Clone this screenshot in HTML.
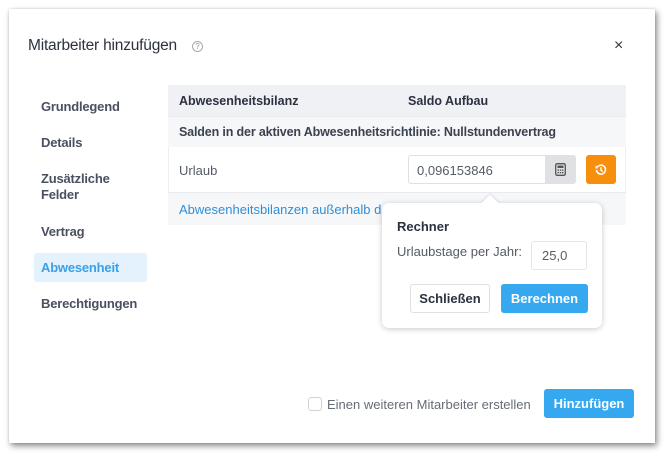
<!DOCTYPE html><html><head><meta charset="utf-8"><style>
*{box-sizing:border-box;margin:0;padding:0}
body{width:670px;height:457px;background:#fff;font-family:"Liberation Sans",sans-serif;color:#3b4150;position:relative;overflow:hidden;font-size:13px}
.a{position:absolute;white-space:nowrap}
.dlg{left:9px;top:9px;width:646px;height:434px;background:#fff;box-shadow:2px 3px 6px rgba(0,0,0,.45),0 0 2px rgba(0,0,0,.15)}
.b{font-weight:bold}
.nav{left:41px;font-weight:bold;color:#4a5060;font-size:13px;letter-spacing:-.2px}
.btn{border-radius:3px;text-align:center;font-weight:bold;font-size:13px;line-height:29px}
</style></head><body>
<div class="a dlg"></div>
<div class="a" style="left:28px;top:37px;font-size:15.5px;color:#2c3140;letter-spacing:-.2px">Mitarbeiter hinzufügen</div>
<div class="a" style="left:192px;top:41px;width:11px;height:11px;border:1px solid #aaa;border-radius:50%;font-size:8px;line-height:9px;text-align:center;color:#999">?</div>
<div class="a" style="left:614px;top:37px;font-size:16px;color:#333">×</div>

<div class="a nav" style="top:99px">Grundlegend</div>
<div class="a nav" style="top:135px">Details</div>
<div class="a nav" style="top:171px;line-height:16px">Zusätzliche<br>Felder</div>
<div class="a nav" style="top:224px">Vertrag</div>
<div class="a" style="left:34px;top:253px;width:113px;height:29px;background:#e3f2fc;border-radius:3px"></div>
<div class="a nav" style="top:260px;color:#3aa0e8">Abwesenheit</div>
<div class="a nav" style="top:296px">Berechtigungen</div>

<div class="a" style="left:168px;top:85px;width:458px;height:140px;border:1px solid #eceef1;background:#fff"></div>
<div class="a" style="left:168px;top:85px;width:458px;height:31px;background:#eff1f4"></div>
<div class="a" style="left:168px;top:116px;width:458px;height:31px;background:#f6f7f9;border-top:1px solid #e8eaed"></div>
<div class="a" style="left:168px;top:192px;width:458px;height:33px;background:#f6f7f9;border-top:1px solid #e8eaed"></div>
<div class="a b" style="left:179px;top:94px;font-size:12.5px;color:#2c3140">Abwesenheitsbilanz</div>
<div class="a b" style="left:408px;top:94px;font-size:12.5px;color:#2c3140">Saldo Aufbau</div>
<div class="a b" style="left:179px;top:125px;font-size:12.5px;color:#3b4150;letter-spacing:-.15px">Salden in der aktiven Abwesenheitsrichtlinie: Nullstundenvertrag</div>
<div class="a" style="left:179px;top:163px;color:#555b66">Urlaub</div>
<div class="a" style="left:408px;top:155px;width:168px;height:29px;border:1px solid #dde0e4;border-radius:3px;background:#fff"></div>
<div class="a" style="left:545px;top:155px;width:31px;height:29px;background:#dfe1e4;border-radius:0 3px 3px 0"></div>
<svg class="a" style="left:555px;top:163px" width="11" height="13" viewBox="0 0 11 13"><rect x=".7" y=".7" width="9.6" height="11.6" rx="1.5" fill="none" stroke="#555" stroke-width="1.3"/><rect x="2.5" y="2.5" width="6" height="2.5" fill="#555"/><g fill="#555"><rect x="2.5" y="6.5" width="1.5" height="1.3"/><rect x="4.8" y="6.5" width="1.5" height="1.3"/><rect x="7" y="6.5" width="1.5" height="1.3"/><rect x="2.5" y="9" width="1.5" height="1.3"/><rect x="4.8" y="9" width="1.5" height="1.3"/><rect x="7" y="9" width="1.5" height="1.3"/></g></svg>
<div class="a" style="left:417px;top:163px;color:#555b66">0,096153846</div>
<div class="a" style="left:586px;top:155px;width:30px;height:29px;background:#f78e0c;border-radius:3px"></div>
<svg class="a" style="left:595px;top:164px" width="12" height="12" viewBox="0 0 12 12"><path d="M2.2 3.2A4.5 4.5 0 1 1 1.5 6" fill="none" stroke="#fff" stroke-width="1.6"/><path d="M0.6 1.2L2.8 4.2L0.3 4.6Z" fill="#fff"/><path d="M6 3.3V6.3L7.8 7.6" fill="none" stroke="#fff" stroke-width="1.4"/></svg>
<div class="a" style="left:179px;top:202px;color:#2f8fd8">Abwesenheitsbilanzen außerhalb der</div>

<div class="a" style="left:382px;top:203px;width:220px;height:125px;background:#fff;border-radius:7px;box-shadow:0 1px 6px rgba(0,0,0,.22)"></div>
<div class="a" style="left:484px;top:197px;width:12px;height:12px;background:#fff;transform:rotate(45deg);box-shadow:-1px -1px 2px rgba(0,0,0,.1)"></div>
<div class="a b" style="left:397px;top:219px;color:#2c3140">Rechner</div>
<div class="a" style="left:397px;top:244px;color:#555b66">Urlaubstage per Jahr:</div>
<div class="a" style="left:531px;top:241px;width:56px;height:29px;border:1px solid #e3e5e8;border-radius:3px;padding-left:10px;line-height:28px;color:#555b66">25,0</div>
<div class="a btn" style="left:410px;top:284px;width:80px;height:29px;border:1px solid #dde0e4;color:#2c3140;line-height:28px">Schließen</div>
<div class="a btn" style="left:501px;top:284px;width:87px;height:29px;background:#35a8ef;color:#fff;line-height:30px">Berechnen</div>

<div class="a" style="left:308px;top:397px;width:14px;height:14px;border:1px solid #cfd3d8;border-radius:3px"></div>
<div class="a" style="left:327px;top:397px;color:#666c76">Einen weiteren Mitarbeiter erstellen</div>
<div class="a btn" style="left:544px;top:389px;width:90px;height:29px;background:#35a8ef;color:#fff;line-height:30px">Hinzufügen</div>
</body></html>
